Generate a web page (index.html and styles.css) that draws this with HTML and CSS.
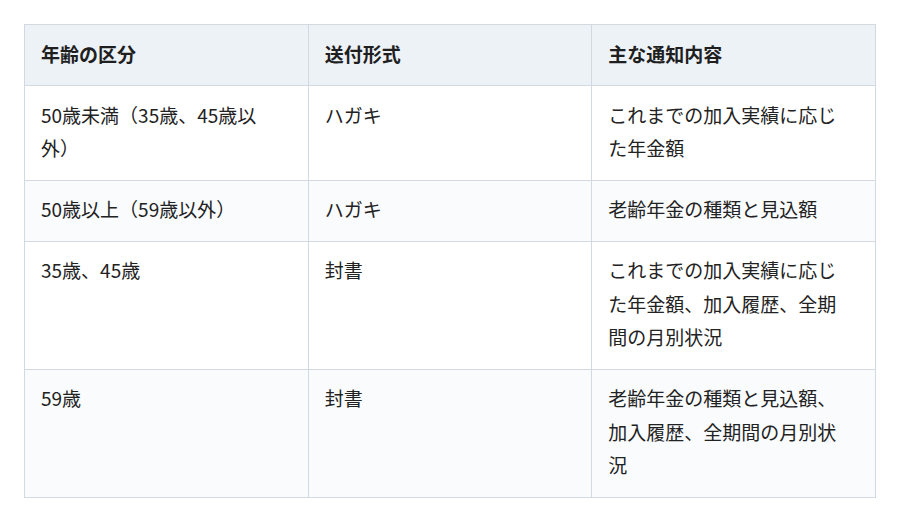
FILE: index.html
```html
<!DOCTYPE html>
<html lang="ja">
<head>
<meta charset="utf-8">
<link rel="stylesheet" href="styles.css">
</head>
<body>
<table class="notice-table">
  <thead>
    <tr>
      <th>年齢の区分</th>
      <th>送付形式</th>
      <th>主な通知内容</th>
    </tr>
  </thead>
  <tbody>
    <tr>
      <td>50歳未満（35歳、45歳以<br>外）</td>
      <td>ハガキ</td>
      <td>これまでの加入実績に応じ<br>た年金額</td>
    </tr>
    <tr>
      <td>50歳以上（59歳以外）</td>
      <td>ハガキ</td>
      <td>老齢年金の種類と見込額</td>
    </tr>
    <tr>
      <td>35歳、45歳</td>
      <td>封書</td>
      <td>これまでの加入実績に応じ<br>た年金額、加入履歴、全期<br>間の月別状況</td>
    </tr>
    <tr>
      <td>59歳</td>
      <td>封書</td>
      <td>老齢年金の種類と見込額、<br>加入履歴、全期間の月別状<br>況</td>
    </tr>
  </tbody>
</table>
</body>
</html>
```
FILE: styles.css
```css
html, body {
  margin: 0;
  padding: 0;
  background: #ffffff;
}

body {
  padding: 24px 24px 0 24px;
  font-family: "Noto Sans CJK JP", "Noto Sans", sans-serif;
  color: #222222;
}

.notice-table {
  width: 852px;
  border-collapse: collapse;
  table-layout: fixed;
  font-size: 19px;
  line-height: 33.5px;
}

.notice-table th,
.notice-table td {
  border: 1px solid #d3d9e0;
  padding: 11.5px 16px 15px 16px;
  text-align: left;
  vertical-align: top;
}

.notice-table th {
  background: #edf2f7;
  font-weight: 700;
  color: #1f1f1f;
}

.notice-table tbody tr:nth-child(even) td {
  background: #f9fbfd;
}
```
